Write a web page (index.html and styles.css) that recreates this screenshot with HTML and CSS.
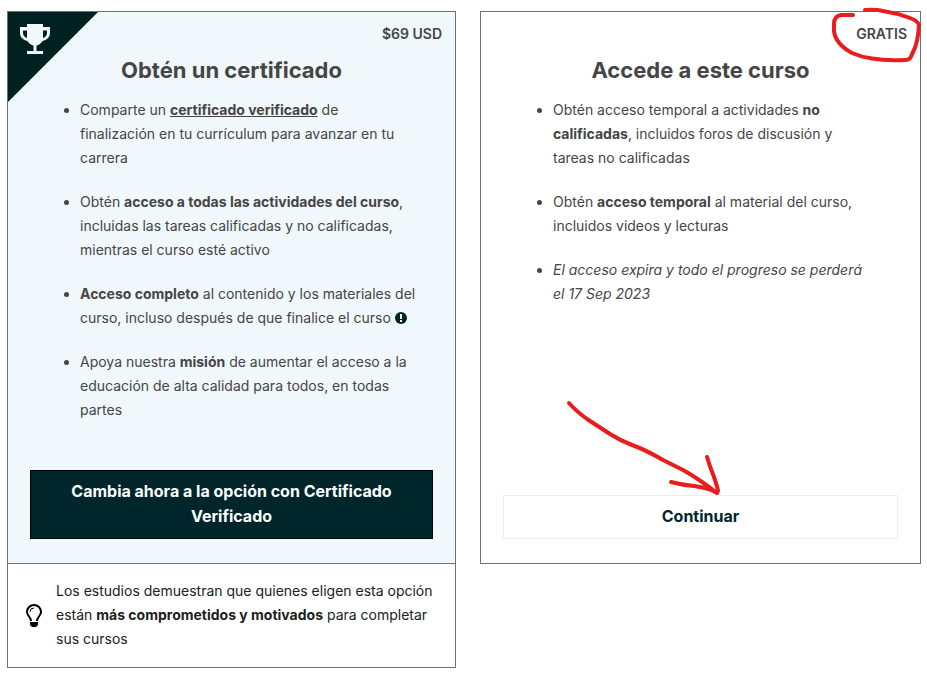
FILE: index.html
```html
<!DOCTYPE html>
<html lang="es">
<head>
    <meta charset="UTF-8">
    <meta name="viewport" content="width=device-width, initial-scale=1.0">
    <title>Elige una opción</title>
    <link rel="stylesheet" href="styles.css">
</head>
<body>
    <main class="options">
        <section class="card card-verified">
            <div class="ribbon">
                <svg class="trophy" viewBox="0 0 30 30" aria-hidden="true">
                    <path fill="#f0f8fb" fill-rule="evenodd" d="M7 0h16v3h7v6c0 4-3 7-7.500 8-1.500 2.500-3.500 4-6 4.500V27H23v3H7v-3h6.500v-5.500C11 21 9 19.500 7.500 17 3 16 0 13 0 9V3h7zM7 6.500H3V9c0 2.500 1.500 4 4 5zM23 6.500V14c2.500-1 4-2.500 4-5V6.500z"/>
                </svg>
            </div>
            <div class="price">$69 USD</div>
            <h2>Obtén un certificado</h2>
            <ul>
                <li>Comparte un <a href="#">certificado verificado</a> de finalización en tu currículum para avanzar en tu carrera</li>
                <li>Obtén <strong>acceso a todas las actividades del curso</strong>, incluidas las tareas calificadas y no calificadas, mientras el curso esté activo</li>
                <li><strong>Acceso completo</strong> al contenido y los materiales del curso, incluso después de que finalice el curso
                    <svg class="info" viewBox="0 0 12 12" aria-hidden="true">
                        <circle cx="6" cy="6" r="6" fill="#00262b"/>
                        <path fill="#fff" d="M5 2h2v5H5zM5 8h2v2H5z"/>
                    </svg></li>
                <li>Apoya nuestra <strong>misión</strong> de aumentar el acceso a la educación de alta calidad para todos, en todas partes</li>
            </ul>
            <div class="action">
                <button type="button" class="btn btn-primary">Cambia ahora a la opción con Certificado Verificado</button>
            </div>
        </section>

        <section class="card card-free">
            <div class="price">GRATIS</div>
            <svg class="mark-circle" viewBox="829 6 95 58" aria-hidden="true">
                <path d="M853 15H841Q834 16 834 24V31C835 41 843 48 852 53Q861 57 872 58.500Q886 61 905 60C911 60 911 56 913 52Q918 43 919 25Q918 21 910 18Q897 13 883 11Q875 9 865 10"/>
            </svg>
            <h2>Accede a este curso</h2>
            <ul>
                <li>Obtén acceso temporal a actividades <strong>no calificadas</strong>, incluidos foros de discusión y tareas no calificadas</li>
                <li>Obtén <strong>acceso temporal</strong> al material del curso, incluidos videos y lecturas</li>
                <li><em>El acceso expira y todo el progreso se perderá el 17 Sep 2023</em></li>
            </ul>
            <div class="action">
                <button type="button" class="btn btn-outline">Continuar</button>
                <svg class="mark-arrow" viewBox="565 399 157 98" aria-hidden="true">
                    <path d="M569 403Q576 411 587 419L610 434Q621 441 632 445Q646 450 663 460L683 470Q699 479 717 493M707 457Q710 467 714 477Q718 489 718 491L717 493M671 482Q682 485 694 486Q710 488 717 493"/>
                </svg>
            </div>
        </section>

        <aside class="note">
            <svg class="bulb" viewBox="0 0 16 23" aria-hidden="true">
                <path fill="none" stroke="#000" stroke-width="2" d="M5 17C5 13 1 12 1 8a7 7 0 0 1 14 0c0 4-4 5-4 9"/>
                <path fill="none" stroke="#000" stroke-width="1" d="M4 8a4 4 0 0 1 4-4"/>
                <path d="M4 18h8v3l-2 2H6l-2-2z"/>
            </svg>
            <p>Los estudios demuestran que quienes eligen esta opción están <strong>más comprometidos y motivados</strong> para completar sus cursos</p>
        </aside>
    </main>
</body>
</html>
```
FILE: styles.css
```css
* {
    box-sizing: border-box;
}
body {
    margin: 0;
    background: #fff;
    color: #454545;
    font-family: Inter, "Liberation Sans", sans-serif;
    font-size: 14px;
    line-height: 24px;
}
.options {
    display: grid;
    grid-template-columns: 449fr 441fr;
    column-gap: 24px;
    padding: 11px 6px 5px 7px;
}
.card {
    position: relative;
    display: flex;
    flex-direction: column;
    padding: 10px 22px 24px;
    border: 1px solid #707070;
}
.card-verified {
    background: #f0f8fb;
}
.ribbon {
    position: absolute;
    top: 0;
    left: 0;
    width: 90px;
    height: 90px;
    padding: 12px;
    background: #002121;
    clip-path: polygon(0 0, 100% 0, 0 100%);
}
.trophy {
    display: block;
    width: 30px;
    height: 30px;
}
.price {
    margin-right: -9px;
    text-align: right;
    font-weight: 600;
}
h2 {
    margin: 10px 0 14px;
    font-size: 22px;
    font-weight: 700;
    line-height: 28px;
    text-align: center;
}
ul {
    margin: 0 0 48px;
    padding: 0 16px 0 50px;
}
.card-free ul {
    padding-right: 32px;
}
li + li {
    margin-top: 20px;
}
strong {
    font-weight: 700;
}
li a {
    color: inherit;
    font-weight: 700;
}
.info {
    width: 12px;
    height: 12px;
    vertical-align: -1px;
}
.action {
    position: relative;
    margin-top: auto;
}
.btn {
    display: block;
    width: 100%;
    padding: 8px 36px 9px;
    border: 1px solid #000;
    font-family: inherit;
    font-size: 16px;
    font-weight: 700;
    line-height: 25px;
    cursor: pointer;
}
.btn-primary {
    background: #00262b;
    color: #fff;
}
.btn-outline {
    background: #fff;
    border-color: #eee;
    color: #00262b;
}
.note {
    display: flex;
    align-items: center;
    gap: 14px;
    margin-top: -1px;
    padding: 15px 22px 16px 18px;
    border: 1px solid #707070;
    color: #212121;
}
.note p {
    margin: 0;
}
.bulb {
    flex: none;
    width: 16px;
    height: 23px;
}

/* hand-drawn marks */
.mark-circle,
.mark-arrow {
    position: absolute;
    fill: none;
    stroke: #ea1c1c;
    stroke-width: 4;
    stroke-linecap: round;
    stroke-linejoin: round;
    pointer-events: none;
}
.mark-circle {
    top: -6px;
    right: -4px;
    width: 95px;
    height: 58px;
}
.mark-arrow {
    left: calc(50% - 136px);
    bottom: 42px;
    width: 157px;
    height: 98px;
}
```
